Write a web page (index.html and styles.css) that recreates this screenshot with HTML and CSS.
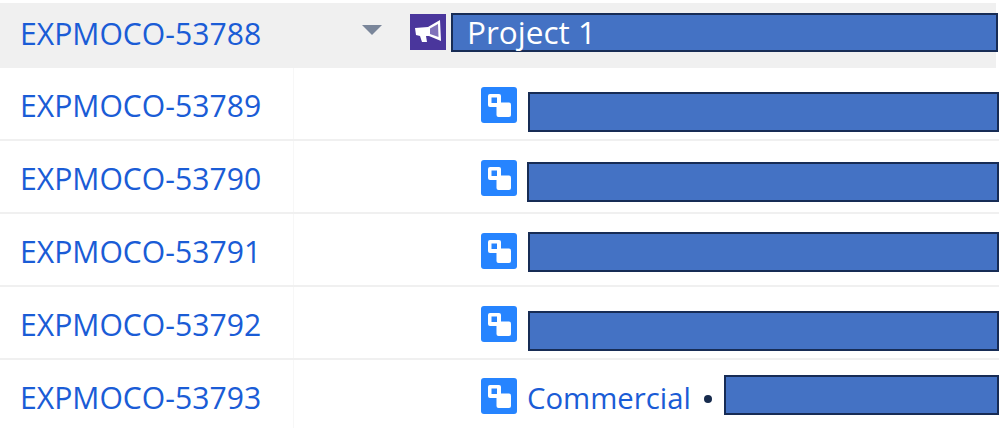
FILE: index.html
```html
<!DOCTYPE html>
<html lang="en">
<head>
    <meta charset="UTF-8">
    <title>Issues</title>
    <link rel="stylesheet" href="styles.css">
</head>
<body>
<svg class="defs" width="0" height="0">
    <symbol id="task" viewBox="0 0 36 36">
        <rect width="36" height="36" rx="3" fill="#2684ff"/>
        <rect x="7" y="7" width="13" height="13" rx="2" fill="#fff"/>
        <rect x="10.500" y="10.500" width="5.500" height="5.500" fill="#2684ff"/>
        <rect x="15.500" y="15.500" width="14.500" height="14.500" rx="2" fill="#fff"/>
    </symbol>
</svg>
<ul id="list">
    <li class="row row-epic">
        <a class="key">EXPMOCO-53788</a>
        <div class="tree">
            <span class="caret"></span>
            <svg class="icon" width="36" height="36" viewBox="0 0 36 36">
                <rect width="36" height="36" fill="#4a369c"/>
                <path d="M5 14 L18 13 L30 6 L31 27 L19 22 L16 22 L17 28 L12 28 L10 22 L6 21 Z" fill="#fff"/>
                <path d="M20 14.500 L28 10 L28.500 23 L20 20 Z" fill="#4a369c" fill-opacity="0.7"/>
            </svg>
            <div class="bar bar-title">Project 1</div>
        </div>
    </li>
    <li class="row">
        <a class="key">EXPMOCO-53789</a>
        <div class="tree">
            <svg class="icon"><use href="#task"/></svg>
            <div class="bar bar-low"></div>
        </div>
    </li>
    <li class="row">
        <a class="key">EXPMOCO-53790</a>
        <div class="tree">
            <svg class="icon"><use href="#task"/></svg>
            <div class="bar bar-mid"></div>
        </div>
    </li>
    <li class="row">
        <a class="key">EXPMOCO-53791</a>
        <div class="tree">
            <svg class="icon"><use href="#task"/></svg>
            <div class="bar bar-high"></div>
        </div>
    </li>
    <li class="row">
        <a class="key">EXPMOCO-53792</a>
        <div class="tree">
            <svg class="icon"><use href="#task"/></svg>
            <div class="bar bar-low"></div>
        </div>
    </li>
    <li class="row row-last">
        <a class="key">EXPMOCO-53793</a>
        <div class="tree">
            <svg class="icon"><use href="#task"/></svg>
            <a class="parent">Commercial</a>
            <span class="dot"></span>
            <div class="bar bar-short"></div>
        </div>
    </li>
</ul>
</body>
</html>
```

FILE: styles.css
```css
html,body,ul{
    margin: 0;
    padding: 0;
}
body{
    width: 999px;
    height: 428px;
    overflow: hidden;
    background-color: #ffffff;
    font-family: "Open Sans", "Noto Sans", sans-serif;
}
.defs{
    display: block;
    height: 0;
}
#list{
    padding-top: 3px;
    list-style: none;
}
.row{
    display: flex;
    box-sizing: border-box;
    height: 73px;
    border-bottom: 2px solid #f0f0f0;
}
.row-epic{
    height: 65px;
    margin-right: 3px;
    border-bottom: 0;
    background-color: #f0f0f0;
}
.row-last{
    height: 68px;
    border-bottom: 0;
}
.key{
    box-sizing: border-box;
    width: 294px;
    padding: 19px 0 0 20px;
    border-right: 1px solid #f7f7f7;
    color: #1a5cd6;
    font-size: 30.150px;
    line-height: 38px;
}
.row-epic .key{
    padding-top: 12px;
    border-right: 0;
}
.tree{
    display: flex;
    flex: 1;
    align-items: flex-start;
    padding-left: 187px;
}
.row-epic .tree{
    padding-left: 68px;
}
.caret{
    width: 0;
    height: 0;
    margin-top: 22px;
    margin-right: 28px;
    border-top: 10px solid #7a869a;
    border-left: 10px solid transparent;
    border-right: 10px solid transparent;
}
.icon{
    flex: none;
    width: 36px;
    height: 36px;
    margin-top: 19px;
}
.row-epic .icon{
    margin-top: 11px;
}
.row-last .icon{
    margin-top: 18px;
}
.bar{
    box-sizing: border-box;
    flex: 1;
    height: 40px;
    margin-left: 11px;
    border: 2px solid #172c55;
    background-color: #4472c4;
}
.bar-title{
    height: 39px;
    margin-top: 10px;
    margin-left: 5px;
    margin-right: -2px;
    padding-left: 14px;
    color: #ffffff;
    font-size: 31.500px;
    line-height: 34px;
}
.bar-low{
    margin-top: 24px;
}
.bar-mid{
    margin-top: 21px;
    margin-left: 10px;
}
.bar-high{
    margin-top: 18px;
}
.bar-short{
    margin-top: 15px;
    margin-left: 12px;
}
.parent{
    margin-left: 10px;
    margin-top: 19px;
    color: #1a5cd6;
    font-size: 29.300px;
    line-height: 38px;
}
.dot{
    width: 8px;
    height: 8px;
    margin-top: 35px;
    margin-left: 13px;
    border-radius: 50%;
    background-color: #172b4d;
}
```
